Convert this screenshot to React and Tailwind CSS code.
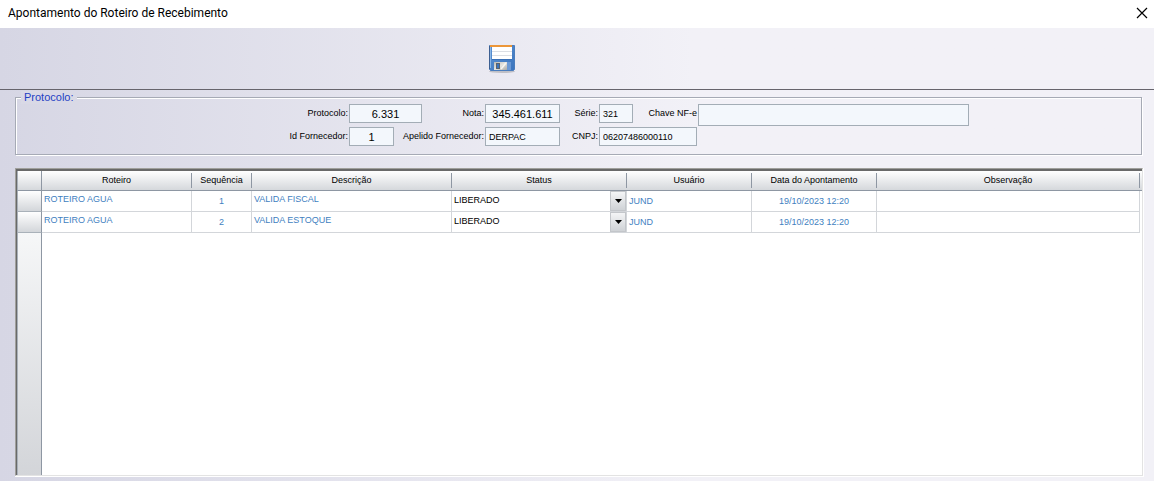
import React from 'react';

const columns = [
  { label: 'Roteiro', width: 'w-[150px]' },
  { label: 'Sequência', width: 'w-[60px]' },
  { label: 'Descrição', width: 'w-[200px]' },
  { label: 'Status', width: 'w-[175px]' },
  { label: 'Usuário', width: 'w-[125px]' },
  { label: 'Data do Apontamento', width: 'w-[125px]' },
  { label: 'Observação', width: '' },
];

const rows = [
  { roteiro: 'ROTEIRO AGUA', seq: 1, descricao: 'VALIDA FISCAL', status: 'LIBERADO', usuario: 'JUND', data: '19/10/2023 12:20', obs: '' },
  { roteiro: 'ROTEIRO AGUA', seq: 2, descricao: 'VALIDA ESTOQUE', status: 'LIBERADO', usuario: 'JUND', data: '19/10/2023 12:20', obs: '' },
];

function SaveIcon() {
  return (
    <svg width="30" height="30" viewBox="0 0 30 30" aria-hidden="true">
      <defs>
        <linearGradient id="disk" x1="0" y1="0" x2="1" y2="1">
          <stop offset="0" stopColor="#5a92d4" />
          <stop offset="1" stopColor="#3b74bd" />
        </linearGradient>
        <linearGradient id="shutter" x1="0" y1="0" x2="1" y2="1">
          <stop offset="0" stopColor="#b9b9b5" />
          <stop offset="0.5" stopColor="#e6e5e0" />
          <stop offset="1" stopColor="#a9a9a6" />
        </linearGradient>
      </defs>
      <ellipse cx="15" cy="27.5" rx="13" ry="1.5" fill="#000" opacity="0.18" />
      <path d="M2.5 1.5h25v24l-1 1h-23l-1-1z" fill="url(#disk)" stroke="#4a7dbd" />
      <path d="M2.5 2v23" stroke="#3c5f92" />
      <path d="M3.500 3v21" stroke="#8ab6e6" />
      <rect x="3" y="1" width="22" height="2" fill="#ec9638" />
      <rect x="5" y="3" width="20" height="12" fill="#fff" />
      <path d="M5 7.5h20M5 11.5h20" stroke="#dcdfe4" />
      <path d="M5 15.5h20" stroke="#3a70b6" />
      <rect x="7" y="18" width="13" height="8" fill="url(#shutter)" />
      <rect x="9.5" y="19.5" width="3" height="5" fill="#3c74bd" stroke="#5a646e" />
      <path d="M14 25l5-6" stroke="#f7f6f2" strokeWidth="1.5" />
      <rect x="20" y="18" width="4" height="8" fill="#6c9ad6" />
    </svg>
  );
}

function Field({ id, label, value, labelWidth, width, big, tall }) {
  return (
    <div className="flex items-start">
      <label htmlFor={id} className={`${labelWidth} shrink-0 pt-[3px] pr-px text-right leading-[13px] whitespace-nowrap`}>
        {label}
      </label>
      <input
        id={id}
        defaultValue={value}
        className={`${width} ${tall ? 'h-[22px]' : 'h-[19px]'} ${
          big ? 'text-center text-[11px]' : 'px-[3px]'
        } border border-[#a3adb6] bg-[#f3f7fc] outline-none`}
      />
    </div>
  );
}

function StatusSelect({ value, label }) {
  return (
    <div className="relative h-5">
      <select
        aria-label={label}
        defaultValue={value}
        className="h-5 w-full appearance-none bg-white pl-[2px] text-black outline-none"
      >
        <option>LIBERADO</option>
        <option>PENDENTE</option>
      </select>
      <span className="pointer-events-none absolute top-0 right-0 flex h-5 w-4 items-center justify-center border border-[#c3c6ca] bg-linear-to-b from-[#f4f5f6] to-[#cfd2d6]">
        <svg width="7" height="4" viewBox="0 0 7 4" aria-hidden="true">
          <path d="M0 0h7L3.5 4z" fill="#000" />
        </svg>
      </span>
    </div>
  );
}

export default function App() {
  return (
    <div className="flex min-h-screen flex-col bg-linear-to-r from-[#d6d6e4] to-[#f2f1f7] to-60% font-['Liberation_Sans',Arial,sans-serif] text-[9px] text-black">
      <header className="flex h-7 items-center justify-between bg-white pr-[6px] pb-[2px] pl-2">
        <h1 className="font-[Roboto,'Segoe_UI',sans-serif] text-[12px] leading-4">Apontamento do Roteiro de Recebimento</h1>
        <button type="button" aria-label="Fechar" className="flex size-3 items-center justify-center">
          <svg width="12" height="12" viewBox="0 0 12 12" aria-hidden="true">
            <path d="M1 1l10 10M11 1L1 11" stroke="#000" strokeWidth="1.2" />
          </svg>
        </button>
      </header>

      <div className="flex h-[62px] items-center border-b border-[#66646c] pl-[487px]">
        <button type="button" aria-label="Salvar">
          <SaveIcon />
        </button>
      </div>

      <main className="flex flex-1 flex-col pt-px pr-[10px] pb-1 pl-[15px]">
        <fieldset className="mr-[2px] border border-[#a6aab5] px-[5px] pb-2 shadow-[1px_1px_0_#fff,inset_1px_1px_0_#fff]">
          <legend className="bg-[#d9d9e6] px-[3px] text-[11px] leading-[13px] text-[#1f3fc4]">
            Protocolo:
          </legend>
          <div className="flex items-start">
            <Field id="protocolo" label="Protocolo:" value="6.331" labelWidth="w-[328px]" width="w-[73px]" big />
            <Field id="nota" label="Nota:" value="345.461.611" labelWidth="w-[63px]" width="w-[75px]" big />
            <Field id="serie" label="Série:" value="321" labelWidth="w-[39px]" width="w-[34px]" />
            <Field id="chave" label="Chave NF-e" value="" labelWidth="w-[65px]" width="w-[271px]" tall />
          </div>
          <div className="mt-px flex items-start">
            <Field id="fornecedor" label="Id Fornecedor:" value="1" labelWidth="w-[328px]" width="w-[45px]" big />
            <Field id="apelido" label="Apelido Fornecedor:" value="DERPAC" labelWidth="w-[91px]" width="w-[75px]" />
            <Field id="cnpj" label="CNPJ:" value="06207486000110" labelWidth="w-[39px]" width="w-[98px]" />
          </div>
        </fieldset>

        <section className="mt-[13px] flex flex-1 flex-col border-r border-b border-white">
          <div className="flex flex-1 flex-col border border-t-[#a0a09c] border-r-[#e3e3e3] border-b-[#e3e3e3] border-l-[#a0a09c] bg-white">
            <div className="flex flex-1 flex-col border-t-2 border-l border-[#696969]">
              <table className="w-full table-fixed border-separate border-spacing-0">
                <colgroup>
                  <col className="w-[25px]" />
                  {columns.map(c => (
                    <col key={c.label} className={c.width} />
                  ))}
                  <col className="w-[2px]" />
                </colgroup>
                <thead>
                  <tr className="h-5 bg-linear-to-b from-white to-[#d3d6da]">
                    <td className="border-r border-b border-l border-[#8e97a3] border-l-[#a9b1b9] p-0" />
                    {columns.map(c => (
                      <th key={c.label} scope="col" className="border-b border-[#8e97a3] p-0 font-normal">
                        <div className="h-[15px] border-r border-[#8e97a3] leading-[15px]">{c.label}</div>
                      </th>
                    ))}
                    <td className="border-b border-[#8e97a3] p-0" />
                  </tr>
                </thead>
                <tbody className="text-[#3f7fbf]">
                  {rows.map(r => (
                    <tr key={r.seq} className="h-[21px] *:border-r *:border-b *:border-[#d3d6da] *:p-0">
                      <td className="border-l border-r-[#8e97a3]! border-b-[#a9b1b9]! border-l-[#a9b1b9]! bg-linear-to-b from-white to-[#d3d6da]" />
                      <td className="pb-1! pl-[2px]! leading-4">{r.roteiro}</td>
                      <td className="text-center leading-4">{r.seq}</td>
                      <td className="pb-1! pl-[2px]! leading-4">{r.descricao}</td>
                      <td>
                        <StatusSelect value={r.status} label={`Status ${r.seq}`} />
                      </td>
                      <td className="pl-[2px]! leading-4">{r.usuario}</td>
                      <td className="text-center leading-4">{r.data}</td>
                      <td>{r.obs}</td>
                      <td className="border-0!" />
                    </tr>
                  ))}
                </tbody>
              </table>
              <div className="w-[25px] flex-1 border-r border-l border-r-[#8e97a3] border-l-[#a9b1b9] bg-linear-to-b from-[#f6f7f8] to-[#d3d5d9]" />
            </div>
          </div>
        </section>
      </main>
    </div>
  );
}
